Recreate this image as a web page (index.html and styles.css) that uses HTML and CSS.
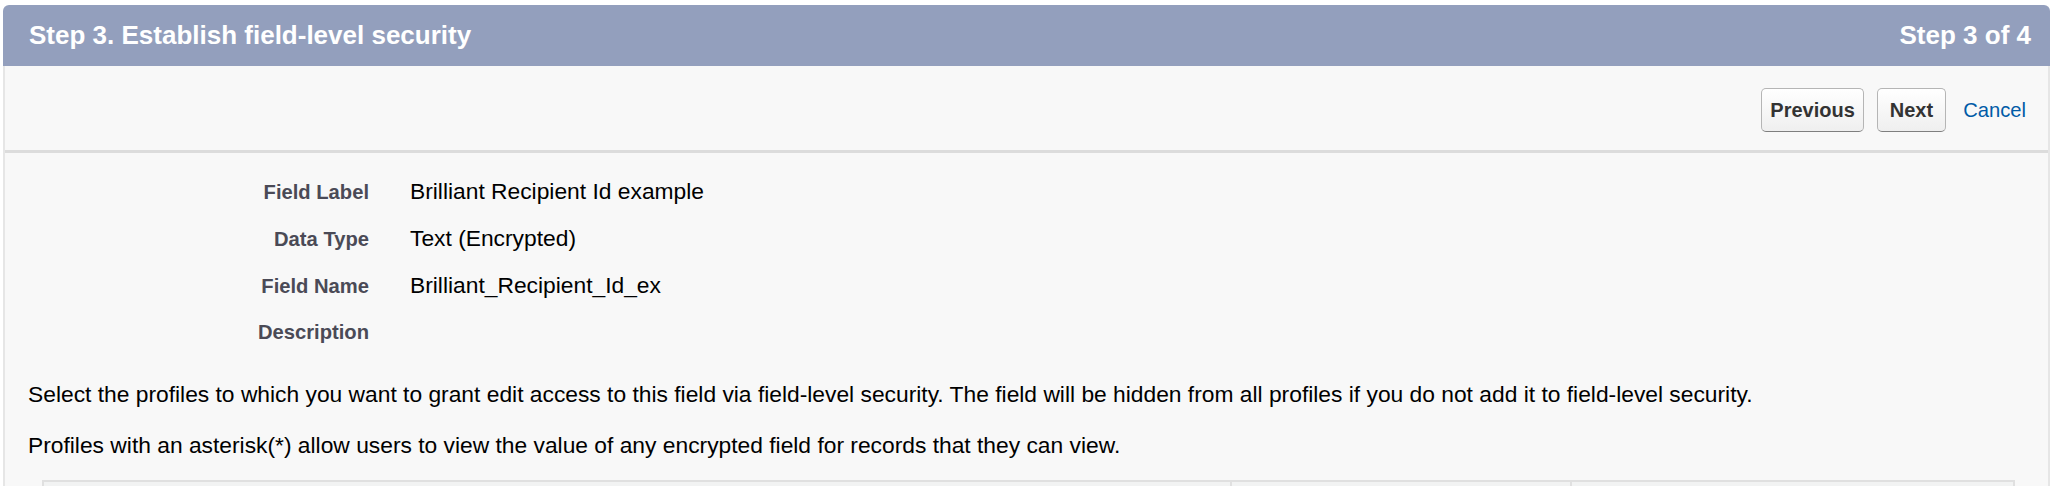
FILE: index.html
```html
<!DOCTYPE html>
<html>
<head>
<meta charset="utf-8">
<link rel="stylesheet" href="styles.css">
</head>
<body>
<div class="wizard">
  <div class="wiz-header">
    <h2 class="wiz-title">Step 3. Establish field-level security</h2>
    <div class="wiz-step">Step 3 of 4</div>
  </div>
  <div class="wiz-body">
    <div class="toolbar">
      <button class="btn btn-prev">Previous</button>
      <button class="btn btn-next">Next</button>
      <a class="cancel" href="#">Cancel</a>
    </div>
    <div class="details">
      <div class="row"><div class="label">Field Label</div><div class="value">Brilliant Recipient Id example</div></div>
      <div class="row"><div class="label">Data Type</div><div class="value">Text (Encrypted)</div></div>
      <div class="row"><div class="label">Field Name</div><div class="value">Brilliant_Recipient_Id_ex</div></div>
      <div class="row"><div class="label">Description</div><div class="value"></div></div>
    </div>
    <p class="note note-first">Select the profiles to which you want to grant edit access to this field via field-level security. The field will be hidden from all profiles if you do not add it to field-level security.</p>
    <p class="note">Profiles with an asterisk(*) allow users to view the value of any encrypted field for records that they can view.</p>
    <div class="table">
      <div class="cell c1"></div>
      <div class="cell c2"></div>
      <div class="cell c3"></div>
    </div>
  </div>
</div>
</body>
</html>
```

FILE: styles.css
```css
html, body {
  margin: 0;
  padding: 0;
  background: #ffffff;
  font-family: "Liberation Sans", Arial, Helvetica, sans-serif;
}

.wizard {
  margin: 5px 4px 0 3px;
}

.wiz-header {
  height: 61px;
  background: #939fbd;
  border-radius: 6px 6px 0 0;
  display: flex;
  align-items: center;
  justify-content: space-between;
  padding: 0 19px 0 26px;
  color: #ffffff;
}

.wiz-title {
  margin: 0;
  font-size: 26px;
  font-weight: bold;
}

.wiz-step {
  font-size: 26px;
  font-weight: bold;
}

.wiz-body {
  background: #f8f8f8;
  border-left: 2px solid #e6e6e6;
  border-right: 2px solid #e6e6e6;
  height: 460px;
}

.toolbar {
  height: 80px;
  padding-top: 4px;
  display: flex;
  align-items: center;
  justify-content: flex-end;
  padding-right: 22px;
  border-bottom: 3px solid #dcdcdc;
}

.btn {
  font-family: "Liberation Sans", Arial, sans-serif;
  font-size: 20px;
  font-weight: bold;
  color: #333333;
  height: 44px;
  padding: 0 8px;
  margin-right: 13px;
  border: 1px solid #b5b5b5;
  border-bottom-color: #7f7f7f;
  border-radius: 5px;
  background: linear-gradient(#ffffff, #efefef);
}

.btn-next {
  padding: 0 12px;
  margin-right: 17px;
}

.cancel {
  font-size: 20.2px;
  color: #015ba7;
  text-decoration: none;
}

.details {
  padding-top: 15px;
}

.row {
  display: flex;
  align-items: baseline;
  height: 47px;
  line-height: 47px;
}

.label {
  width: 364px;
  text-align: right;
  font-size: 20.2px;
  font-weight: bold;
  color: #4a4a56;
}

.value {
  margin-left: 41px;
  font-size: 22.8px;
  color: #000000;
}

.note {
  margin: 24px 0 0 23px;
  font-size: 22.8px;
  line-height: 27px;
  color: #000000;
}

.note-first {
  margin-top: 25px;
}

.table {
  margin: 21px 33px 0 37px;
  display: grid;
  grid-template-columns: 1188px 340px 1fr;
  border-top: 2px solid #e0e0e0;
  border-left: 2px solid #e0e0e0;
  border-right: 2px solid #e0e0e0;
  background: #f2f3f3;
  height: 40px;
}

.cell {
  border-right: 2px solid #e0e0e0;
}

.c3 {
  border-right: none;
}
```
